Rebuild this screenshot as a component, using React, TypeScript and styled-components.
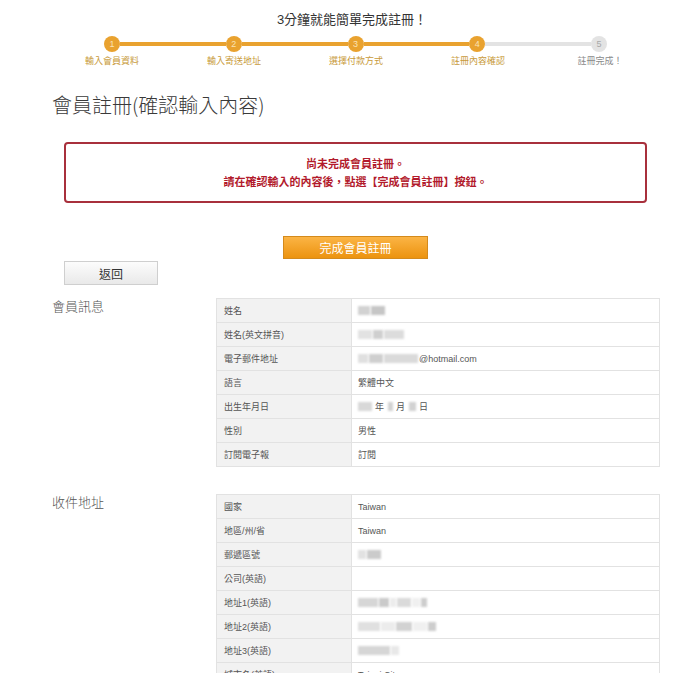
import React from 'react'
import styled, { createGlobalStyle } from 'styled-components'

const GlobalStyle = createGlobalStyle`
  body {
    margin: 0;
    background: #fff;
    font-family: "Liberation Sans", "Noto Sans CJK TC", sans-serif;
    color: #555;
  }
`

const Page = styled.div`
  width: 700px;
  height: 673px;
  overflow: hidden;
`

// stepper
const Stepper = styled.div`
  padding-top: 12px;
`
const StepTitle = styled.div`
  text-align: center;
  font-size: 13px;
  line-height: 16px;
  color: #333;
  padding-left: 4px;
`
const Track = styled.div`
  display: flex;
  align-items: center;
  width: 503px;
  margin: 8px 0 0 104px;
`
const Circle = styled.div<{ $done: boolean }>`
  width: 16px;
  height: 16px;
  border-radius: 50%;
  background: ${(p) => (p.$done ? '#e9a22f' : '#e3e3e3')};
  color: ${(p) => (p.$done ? '#fbe3b4' : '#a8a8a8')};
  font-size: 9px;
  line-height: 16px;
  text-align: center;
  flex: none;
`
const Bar = styled.div<{ $done: boolean }>`
  flex: 1;
  height: 4px;
  background: ${(p) => (p.$done ? '#e9a22f' : '#e3e3e3')};
`
const StepLabels = styled.div`
  display: grid;
  grid-template-columns: repeat(5, 122px);
  margin: 3px 0 0 51px;
`
const StepLabel = styled.div<{ $done: boolean }>`
  text-align: center;
  font-size: 9px;
  line-height: 12px;
  color: ${(p) => (p.$done ? '#c89a3a' : '#8a8a8a')};
`

const Heading = styled.h1`
  margin: 26px 0 0 52px;
  font-family: "Noto Sans CJK TC", sans-serif;
  font-size: 20px;
  line-height: 24px;
  font-weight: 300;
  color: #3a3a3a;
`

const Alert = styled.div`
  box-sizing: border-box;
  margin: 25px 0 0 64px;
  width: 583px;
  height: 61px;
  border: 2px solid #a8303c;
  border-radius: 4px;
  display: flex;
  flex-direction: column;
  justify-content: center;
  align-items: center;
  color: #b21a2c;
  font-size: 11px;
  line-height: 18px;
  font-weight: 700;
  padding-top: 1px;
`

const PrimaryButton = styled.button`
  display: block;
  box-sizing: border-box;
  margin: 33px 0 0 283px;
  width: 145px;
  height: 23px;
  border: 1px solid #d48a1c;
  background: linear-gradient(#fbb445, #ec930f);
  color: #fff;
  font-family: inherit;
  font-size: 12px;
  padding: 0;
`

const BackButton = styled.button`
  display: block;
  box-sizing: border-box;
  margin: 2px 0 0 64px;
  width: 94px;
  height: 24px;
  border: 1px solid #cfcfcf;
  background: linear-gradient(#fcfcfc, #e9e9e9);
  color: #333;
  font-family: inherit;
  font-size: 12px;
  padding: 0;
`

const Section = styled.section<{ $gap: number }>`
  display: grid;
  grid-template-columns: 164px 444px;
  margin-top: ${(p) => p.$gap}px;
  padding-left: 52px;
`
const SectionTitle = styled.div`
  font-family: "Noto Sans CJK TC", sans-serif;
  font-weight: 300;
  font-size: 13px;
  line-height: 16px;
  color: #555;
`
const Table = styled.div`
  border: 1px solid #e2e2e2;
  border-bottom: none;
`
const Row = styled.div`
  display: grid;
  grid-template-columns: 135px 1fr;
  height: 24px;
  box-sizing: border-box;
  border-bottom: 1px solid #e2e2e2;
  font-size: 9px;
  color: #555;
`
const LabelCell = styled.div`
  background: #f2f2f2;
  border-right: 1px solid #e2e2e2;
  display: flex;
  align-items: center;
  padding-left: 7px;
`
const ValueCell = styled.div`
  display: flex;
  align-items: center;
  padding-left: 6px;
`
const Blur = styled.span<{ $w: number; $shade?: string }>`
  display: inline-block;
  width: ${(p) => p.$w}px;
  height: 9px;
  background: ${(p) => p.$shade || '#d2d2d2'};
  filter: blur(1px);
  margin-right: 1px;
`
const Unit = styled.span<{ $gap: number }>`
  margin: 0 ${(p) => p.$gap}px 0 2px;
`

const steps = ['輸入會員資料', '輸入寄送地址', '選擇付款方式', '註冊內容確認', '註冊完成！']
const current = 4

const memberRows: [string, React.ReactNode][] = [
  ['姓名', <><Blur $w={12} /><Blur $w={14} $shade="#c6c6c6" /></>],
  ['姓名(英文拼音)', <><Blur $w={14} $shade="#e2e2e2" /><Blur $w={10} $shade="#cfcfcf" /><Blur $w={20} $shade="#dcdcdc" /></>],
  ['電子郵件地址', <><Blur $w={10} $shade="#e0e0e0" /><Blur $w={14} $shade="#cfcfcf" /><Blur $w={34} $shade="#dadada" /><span>@hotmail.com</span></>],
  ['語言', '繁體中文'],
  ['出生年月日', <><Blur $w={14} $shade="#d8d8d8" /><Unit $gap={4}>年</Unit><Blur $w={5} /><Unit $gap={4}>月</Unit><Blur $w={7} /><Unit $gap={0}>日</Unit></>],
  ['性別', '男性'],
  ['訂閱電子報', '訂閱'],
]

const addressRows: [string, React.ReactNode][] = [
  ['國家', 'Taiwan'],
  ['地區/州/省', 'Taiwan'],
  ['郵遞區號', <><Blur $w={8} $shade="#e2e2e2" /><Blur $w={14} $shade="#cbcbcb" /></>],
  ['公司(英語)', ''],
  ['地址1(英語)', <><Blur $w={20} $shade="#d6d6d6" /><Blur $w={10} $shade="#cacaca" /><Blur $w={6} $shade="#ececec" /><Blur $w={14} $shade="#dadada" /><Blur $w={8} $shade="#f0f0f0" /><Blur $w={6} $shade="#cdcdcd" /></>],
  ['地址2(英語)', <><Blur $w={22} $shade="#e0e0e0" /><Blur $w={14} $shade="#ececec" /><Blur $w={16} $shade="#d2d2d2" /><Blur $w={14} $shade="#f0f0f0" /><Blur $w={8} $shade="#cdcdcd" /></>],
  ['地址3(英語)', <><Blur $w={32} $shade="#d6d6d6" /><Blur $w={8} $shade="#e8e8e8" /></>],
  ['城市名(英語)', 'Taipei City'],
]

function InfoTable({ rows }: { rows: [string, React.ReactNode][] }) {
  return (
    <Table>
      {rows.map(([label, value]) => (
        <Row key={label}>
          <LabelCell>{label}</LabelCell>
          <ValueCell>{value}</ValueCell>
        </Row>
      ))}
    </Table>
  )
}

export default function App() {
  return (
    <Page>
      <GlobalStyle />
      <Stepper>
        <StepTitle>3分鐘就能簡單完成註冊！</StepTitle>
        <Track>
          {steps.map((_, i) => (
            <React.Fragment key={i}>
              {i > 0 && <Bar $done={i + 1 <= current} />}
              <Circle $done={i + 1 <= current}>{i + 1}</Circle>
            </React.Fragment>
          ))}
        </Track>
        <StepLabels>
          {steps.map((s, i) => (
            <StepLabel key={s} $done={i + 1 <= current}>{s}</StepLabel>
          ))}
        </StepLabels>
      </Stepper>

      <Heading>會員註冊(確認輸入內容)</Heading>

      <Alert>
        <div>尚未完成會員註冊。</div>
        <div>請在確認輸入的內容後，點選【完成會員註冊】按鈕。</div>
      </Alert>

      <PrimaryButton>完成會員註冊</PrimaryButton>
      <BackButton>返回</BackButton>

      <Section $gap={13}>
        <SectionTitle>會員訊息</SectionTitle>
        <InfoTable rows={memberRows} />
      </Section>

      <Section $gap={27}>
        <SectionTitle>收件地址</SectionTitle>
        <InfoTable rows={addressRows} />
      </Section>
    </Page>
  )
}
